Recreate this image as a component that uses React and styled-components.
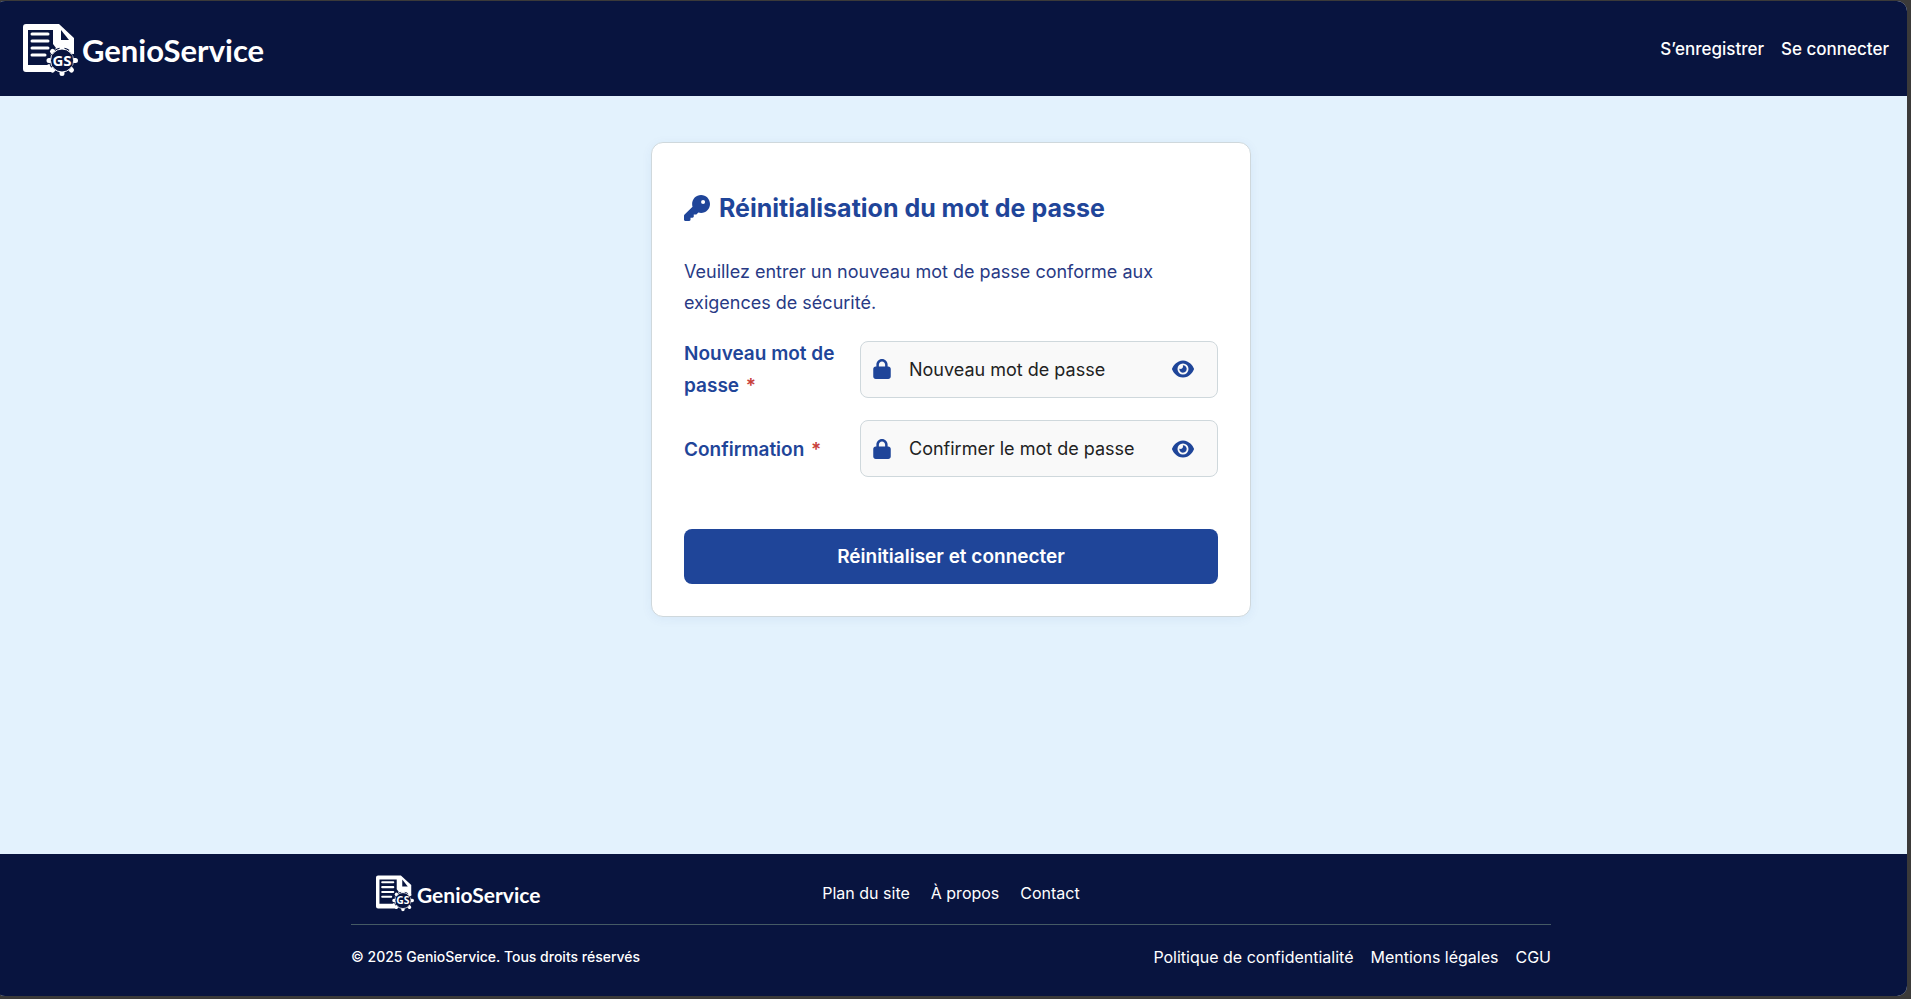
import React, { useId, useState } from "react";
import styled, { createGlobalStyle } from "styled-components";
import { FaEye, FaKey, FaLock } from "react-icons/fa6";

const navy = "#08143f";
const blue = "#1f4599";
const line = "#cfd8dc";

const GlobalStyle = createGlobalStyle`
  * { box-sizing: border-box; }
  body {
    margin: 0;
    background: #3b3a39;
    font-family: Inter, "Liberation Sans", sans-serif;
    overflow-x: hidden;
  }
`;

const Window = styled.div`
  display: flex;
  flex-direction: column;
  min-height: calc(100vh - 4px);
  margin: 1px 4px 3px -5px;
  border-radius: 10px;
  overflow: hidden;
  background: #e3f2fd;
`;

const Header = styled.header`
  display: flex;
  align-items: center;
  justify-content: space-between;
  height: 95px;
  padding: 0 18px 0 28px;
  background: ${navy};
`;

const Links = styled.nav`
  display: flex;
  gap: ${(p) => p.$gap}px;
`;

const NavLink = styled.a`
  color: #fff;
  font-size: ${(p) => p.$size}px;
  font-weight: ${(p) => p.$weight || 400};
  line-height: 24px;
  text-decoration: none;
`;

const Brand = styled.a`
  display: flex;
  align-items: center;
  gap: ${(p) => (p.$small ? 3 : 4)}px;
  padding-top: 2px;
  color: #fff;
  text-decoration: none;

  svg {
    width: ${(p) => (p.$small ? 38 : 55)}px;
    height: ${(p) => (p.$small ? 38 : 55)}px;
  }
`;

const BrandName = styled.span`
  padding-top: 2px;
  font-family: Lato, "Open Sans", sans-serif;
  font-size: ${(p) => (p.$small ? 21 : 31)}px;
  font-weight: 700;
  line-height: 1;
`;

const Main = styled.main`
  flex: 1;
  padding: 46px 16px;
`;

const Card = styled.form`
  width: 100%;
  max-width: 600px;
  margin: 0 auto;
  padding: 45px 32px 32px;
  border: 1px solid ${line};
  border-radius: 12px;
  background: #fff;
  box-shadow: 0 2px 12px rgba(31, 69, 153, 0.06);
`;

const Title = styled.h1`
  display: flex;
  align-items: center;
  gap: 9px;
  margin: 0 0 28px;
  color: ${blue};
  font-size: 25px;
  font-weight: 700;
  line-height: 40px;

  svg { font-size: 26px; }
`;

const Intro = styled.p`
  margin: 0 0 18px;
  color: #283a85;
  font-size: 18px;
  line-height: 31px;
`;

const Field = styled.div`
  display: grid;
  grid-template-columns: 160px minmax(0, 1fr);
  align-items: center;
  column-gap: 16px;
  margin-bottom: 18px;
`;

const Label = styled.label`
  padding-top: 2px;
  color: ${blue};
  font-size: 19px;
  font-weight: 600;
  line-height: 32px;
`;

const Required = styled.span`
  margin-left: 2px;
  color: #c8403a;
`;

const InputBox = styled.div`
  display: flex;
  align-items: center;
  height: 57px;
  padding: 0 11px;
  border: 1px solid ${line};
  border-radius: 8px;
  background: #f9f9f9;
  color: ${blue};

  > svg { flex: none; }
`;

const Input = styled.input`
  flex: 1;
  min-width: 0;
  height: 100%;
  margin-left: 17px;
  padding: 0;
  border: 0;
  outline: 0;
  background: transparent;
  color: #222;
  font: 400 18px Inter, "Liberation Sans", sans-serif;

  &::placeholder { color: #222; opacity: 1; }
`;

const EyeButton = styled.button`
  display: flex;
  margin: 0;
  padding: 6px 12px;
  border: 0;
  background: none;
  color: inherit;
  cursor: pointer;
`;

const Submit = styled.button`
  width: 100%;
  height: 55px;
  margin-top: 34px;
  border: 0;
  border-radius: 8px;
  background: ${blue};
  color: #fff;
  font: 600 19px Inter, "Liberation Sans", sans-serif;
  cursor: pointer;
`;

const Footer = styled.footer`
  padding: 0 16px;
  background: ${navy};
  color: #fff;
`;

const FooterInner = styled.div`
  max-width: 1200px;
  margin: 0 auto;
`;

const FooterTop = styled.div`
  display: grid;
  grid-template-columns: 1fr auto 1fr;
  align-items: center;
  height: 71px;
  padding-top: 8px;
  border-bottom: 1px solid #455a64;

  > ${Brand} { padding: 0 0 0 25px; }
`;

const FooterBottom = styled.div`
  display: flex;
  align-items: center;
  justify-content: space-between;
  height: 71px;
  padding-bottom: 8px;
`;

const Copyright = styled.small`
  font-size: 14px;
  font-weight: 500;
`;

function LogoMark() {
  return (
    <svg viewBox="0 -2 55 55" aria-hidden="true">
      <path fill="#fff" d="M3 0H36L51 14V30H30V48H3Q0 48 0 45V3Q0 0 3 0Z" />
      <path fill={navy} d="M5 6H30V20L33 24L27 31L28 39L24 41H5Z" />
      <path fill={navy} d="M38 6L46 16H38Z" />
      <path stroke="#fff" strokeWidth="3" strokeLinecap="round" d="M9 10H25M9 17H25M9 24H25M9 31H22" />
      <circle cx="39" cy="36.500" r="13" fill={navy} />
      <path
        stroke="#fff"
        strokeWidth="5"
        strokeLinecap="round"
        d="M39 23.500V26M39 47V49.500M26 36.500H28M50.500 36.500H52.500M29.500 27.500L31 29M47 29L48.500 27.500M29.500 46L31 44.500M47 44.500L48.500 46"
      />
      <circle cx="39" cy="36.500" r="11.500" fill={navy} stroke="#fff" strokeWidth="1" />
      <rect x="29" y="30.500" width="20.500" height="12" fill={navy} />
      <text x="39" y="42" fill="#fff" fontFamily="Open Sans, sans-serif" fontSize="15" fontWeight="700" textAnchor="middle">GS</text>
    </svg>
  );
}

function Logo({ small }) {
  return (
    <Brand href="#" $small={small}>
      <LogoMark />
      <BrandName $small={small}>GenioService</BrandName>
    </Brand>
  );
}

function PasswordField({ label, placeholder }) {
  const id = useId();
  const [visible, setVisible] = useState(false);
  return (
    <Field>
      <Label htmlFor={id}>
        {label} <Required>*</Required>
      </Label>
      <InputBox>
        <FaLock size={20} />
        <Input id={id} type={visible ? "text" : "password"} placeholder={placeholder} required />
        <EyeButton type="button" aria-label="Afficher le mot de passe" onClick={() => setVisible(!visible)}>
          <FaEye size={22} />
        </EyeButton>
      </InputBox>
    </Field>
  );
}

export default function App() {
  return (
    <>
      <GlobalStyle />
      <Window>
        <Header>
          <Logo />
          <Links $gap={17}>
            <NavLink href="#" $size={17} $weight={500}>S’enregistrer</NavLink>
            <NavLink href="#" $size={17} $weight={500}>Se connecter</NavLink>
          </Links>
        </Header>
        <Main>
          <Card onSubmit={(e) => e.preventDefault()}>
            <Title>
              <FaKey />
              Réinitialisation du mot de passe
            </Title>
            <Intro>Veuillez entrer un nouveau mot de passe conforme aux exigences de sécurité.</Intro>
            <PasswordField label="Nouveau mot de passe" placeholder="Nouveau mot de passe" />
            <PasswordField label="Confirmation" placeholder="Confirmer le mot de passe" />
            <Submit type="submit">Réinitialiser et connecter</Submit>
          </Card>
        </Main>
        <Footer>
          <FooterInner>
            <FooterTop>
              <Logo small />
              <Links $gap={21}>
                <NavLink href="#" $size={16}>Plan du site</NavLink>
                <NavLink href="#" $size={16}>À propos</NavLink>
                <NavLink href="#" $size={16}>Contact</NavLink>
              </Links>
            </FooterTop>
            <FooterBottom>
              <Copyright>© 2025 GenioService. Tous droits réservés</Copyright>
              <Links $gap={17}>
                <NavLink href="#" $size={16}>Politique de confidentialité</NavLink>
                <NavLink href="#" $size={16}>Mentions légales</NavLink>
                <NavLink href="#" $size={16}>CGU</NavLink>
              </Links>
            </FooterBottom>
          </FooterInner>
        </Footer>
      </Window>
    </>
  );
}
